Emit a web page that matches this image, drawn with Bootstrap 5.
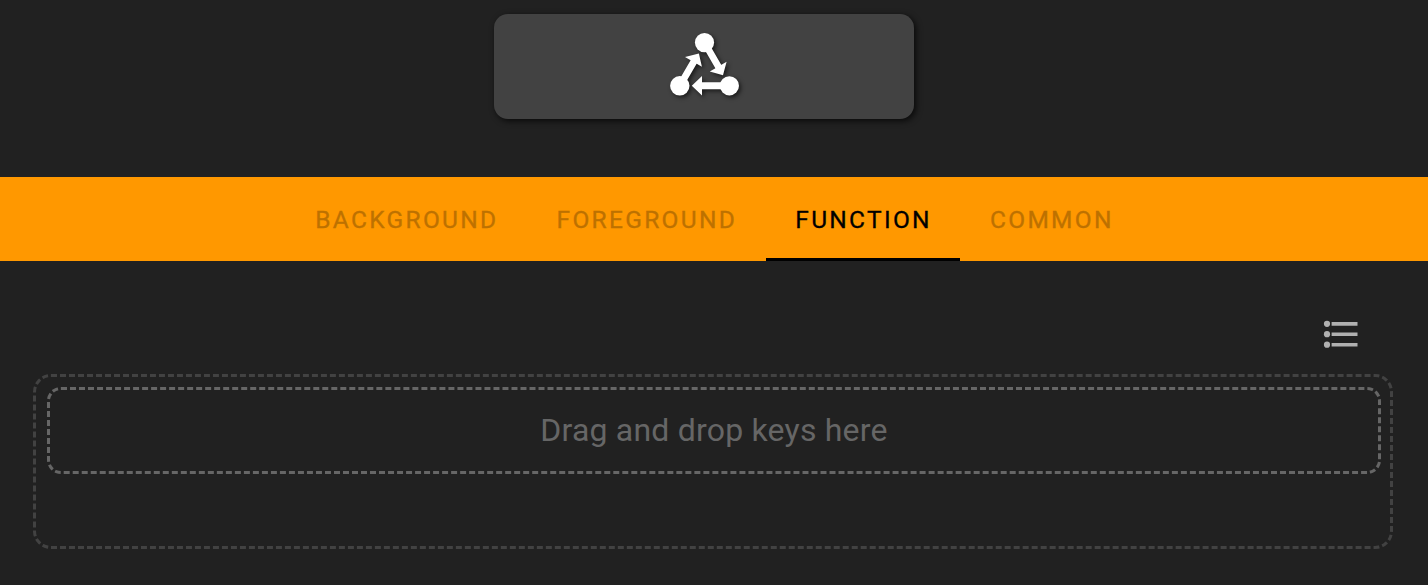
<!DOCTYPE html>
<html lang="en" data-bs-theme="dark">
<head>
<meta charset="utf-8">
<meta name="viewport" content="width=device-width, initial-scale=1">
<title>Key editor</title>
<link href="https://cdn.jsdelivr.net/npm/bootstrap@5.3.0/dist/css/bootstrap.min.css" rel="stylesheet">
<style>
  body { background: #212121; font-family: Roboto, sans-serif; height: 585px; overflow: hidden; }
  .preview { padding: 14px 20px 0 0; height: 177px; }
  .key-card { width: 420px; height: 105px; border-radius: 14px; background: #424242; box-shadow: 2px 2px 6px rgba(0,0,0,.75); }
  .key-card svg { filter: drop-shadow(2px 2px 2px rgba(0,0,0,.6)); margin-top: -5px; margin-left: 2px; }
  .key-tabs { height: 84px; background: #ff9800; }
  .key-tabs .nav-link { height: 84px; padding: 1px 28.6px 0 29.6px; font-size: 24.5px; font-weight: 400; -webkit-text-stroke: .3px; letter-spacing: 2.3px; line-height: 84px; color: #bd7100; transition: none; }
  .key-tabs .nav-link.active { color: #000; box-shadow: inset 0 -3px #000; }
  .tools { height: 113px; padding: 57px 67px 0 0; }
  .drop-area { margin: 0 35px 0 33px; height: 175px; border: 3px dashed #424242; border-radius: 18px; padding: 10px 9px 0 11px; }
  .drop-hint { height: 87px; border: 3px dashed #666; border-radius: 14px; color: #666; font-size: 32px; letter-spacing: .2px; padding-bottom: 2px; }
</style>
</head>
<body>
<header class="preview d-flex justify-content-center align-items-start">
  <div class="key-card d-flex justify-content-center align-items-center">
    <svg width="90" height="80" viewBox="0 0 90 80" fill="#fff" aria-hidden="true">
      <circle cx="44.5" cy="18.6" r="9.6"/><circle cx="19.8" cy="61.8" r="9.7"/><circle cx="69.4" cy="61.8" r="9.6"/>
      <path d="M44.5 18.6 59.5 44.6M19.8 61.8 34.5 36.5M69 61.8H40" fill="none" stroke="#fff" stroke-width="6.9"/>
      <path d="M25 33 38.9 29.4 41.9 42.8ZM49.8 47.4 66.6 37.7 63 51.2ZM31.8 61.8 42 52.1V71.4Z"/>
    </svg>
  </div>
</header>
<nav class="key-tabs nav justify-content-center">
  <a class="nav-link" href="#">BACKGROUND</a>
  <a class="nav-link" href="#">FOREGROUND</a>
  <a class="nav-link active" href="#">FUNCTION</a>
  <a class="nav-link" href="#">COMMON</a>
</nav>
<main>
  <div class="tools d-flex justify-content-end">
    <svg width="40" height="32" viewBox="0 0 40 32" fill="#b0b0b0" aria-hidden="true">
      <circle cx="6" cy="5.8" r="3.1"/><circle cx="6" cy="16.2" r="3.1"/><circle cx="6" cy="26.7" r="3.1"/>
      <path d="M10.6 4.1H36.5V7.7H10.6ZM10.6 14.4H36.5V18H10.6ZM10.6 24.9H36.5V28.5H10.6Z"/>
    </svg>
  </div>
  <section class="drop-area">
    <div class="drop-hint d-flex justify-content-center align-items-center">Drag and drop keys here</div>
  </section>
</main>
<script src="https://cdn.jsdelivr.net/npm/bootstrap@5.3.0/dist/js/bootstrap.bundle.min.js"></script>
</body>
</html>
